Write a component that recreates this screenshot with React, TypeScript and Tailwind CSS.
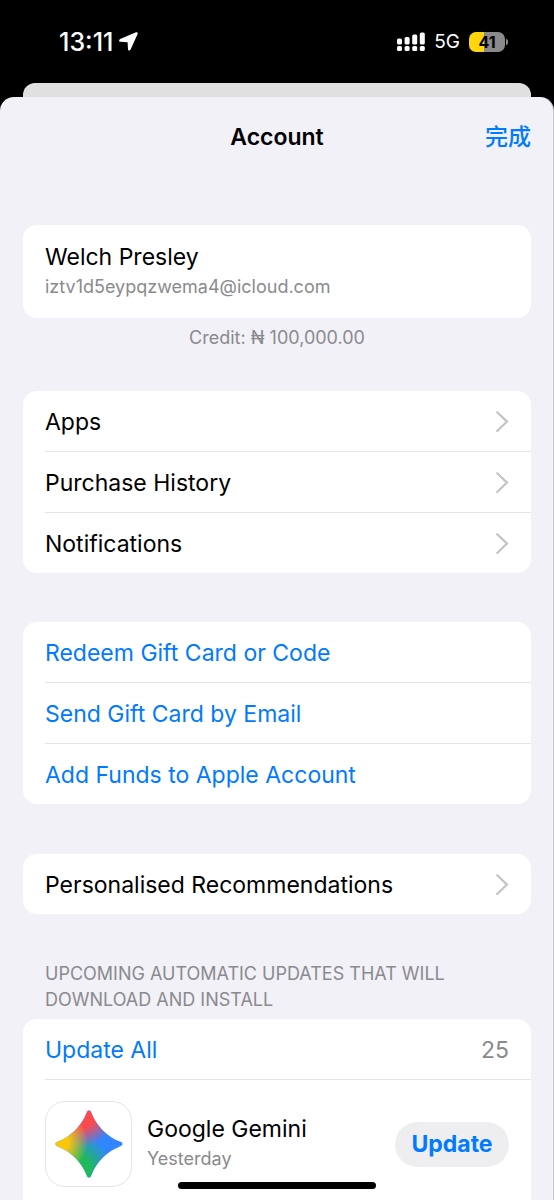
import React from 'react';

type Row = {
  label: string;
  href: string;
};

const accountRows: Row[] = [
  { label: 'Apps', href: '#apps' },
  { label: 'Purchase History', href: '#history' },
  { label: 'Notifications', href: '#notifications' },
];

const giftRows: string[] = [
  'Redeem Gift Card or Code',
  'Send Gift Card by Email',
  'Add Funds to Apple Account',
];

const Chevron: React.FC = () => (
  <svg className="h-[22px] w-[13px]" viewBox="0 0 13 22" fill="none" aria-hidden="true">
    <path d="M1.2 1.2 11 10.6 1.2 20" stroke="#c4c4c7" strokeWidth="2.2" strokeLinecap="round" />
  </svg>
);

const Signal: React.FC = () => (
  <svg className="h-5 w-7" viewBox="0 0 28 20" fill="#fff" aria-hidden="true">
    <rect x="0" y="6.5" width="5" height="6" rx="1.6" />
    <rect x="7.6" y="5" width="5" height="7.5" rx="1.6" />
    <rect x="15.2" y="2.6" width="5" height="9.9" rx="1.6" />
    <rect x="22.8" y="0.4" width="5" height="12.1" rx="1.6" />
    <rect x="0" y="14" width="5" height="5" rx="1.6" />
    <rect x="7.6" y="14" width="5" height="5" rx="1.6" />
    <rect x="15.2" y="14" width="5" height="5" rx="1.6" />
    <rect x="22.8" y="14" width="5" height="5" rx="1.6" />
  </svg>
);

const StatusBar: React.FC = () => (
  <div className="flex h-[83px] items-center justify-between pr-[46px] pl-[59px] text-white">
    <div className="flex items-center gap-[6px]">
      <time className="text-[25px] leading-7 font-medium">13:11</time>
      <svg className="h-[19px] w-[19px]" viewBox="0 0 19 19" fill="#fff" aria-hidden="true">
        <path d="M17 .3 1.200 7C-.4 7.700-.2 9.700 1.500 9.800L8.600 10.300 9 17.200c.1 1.700 1.900 1.900 2.600.4L18.600 1.900C19 .8 18.100-.1 17 .3Z" />
      </svg>
    </div>
    <div className="flex items-center">
      <Signal />
      <span className="ml-[9px] text-[19px] leading-7">5G</span>
      <div className="ml-[9px] flex h-5 w-9 items-center justify-center rounded-[7px] bg-linear-to-r from-[#ffd60a] from-42% to-[#8a8a8a] to-42% text-[16px] leading-5 font-bold text-black">
        41
      </div>
      <div className="ml-px h-[6px] w-[2px] rounded-r-full bg-[#8a8a8a]" />
    </div>
  </div>
);

const GeminiIcon: React.FC = () => (
  <svg className="h-[68px] w-[68px]" viewBox="0 0 68 68" role="img" aria-label="Google Gemini">
    <defs>
      <clipPath id="spark">
        <path d="M34 .5C35.1 .5 35.8 1.2 36.200 2.500C41.300 16 52 26.700 65.500 31.800C66.800 32.200 67.500 32.900 67.500 34S66.800 35.800 65.500 36.200C52 41.300 41.300 52 36.200 65.500C35.800 66.800 35.100 67.500 34 67.500S32.200 66.800 31.800 65.500C26.700 52 16 41.300 2.500 36.200C1.200 35.800 .5 35.100 .5 34S1.200 32.200 2.500 31.800C16 26.700 26.700 16 31.800 2.500C32.200 1.200 32.900 .5 34 .5Z" />
      </clipPath>
      <radialGradient id="red" gradientUnits="userSpaceOnUse" cx="26" cy="2" r="35">
        <stop offset="0.45" stopColor="#fb4a4f" />
        <stop offset="1" stopColor="#fb4a4f" stopOpacity="0" />
      </radialGradient>
      <radialGradient id="yellow" gradientUnits="userSpaceOnUse" cx="0" cy="32" r="33">
        <stop offset="0.4" stopColor="#fcc60c" />
        <stop offset="1" stopColor="#fcc60c" stopOpacity="0" />
      </radialGradient>
      <radialGradient id="green" gradientUnits="userSpaceOnUse" cx="20" cy="60" r="37">
        <stop offset="0.4" stopColor="#1fb85c" />
        <stop offset="1" stopColor="#1fb85c" stopOpacity="0" />
      </radialGradient>
    </defs>
    <g clipPath="url(#spark)">
      <rect width="68" height="68" fill="#3186ff" />
      <rect width="68" height="68" fill="url(#green)" />
      <rect width="68" height="68" fill="url(#red)" />
      <rect width="68" height="68" fill="url(#yellow)" />
    </g>
  </svg>
);

const LinkRow: React.FC<Row> = ({ label, href }) => (
  <li className="group pl-[22px]">
    <a
      href={href}
      className="flex h-[61px] items-center justify-between border-b border-[#e4e4e6] pt-px pr-[22px] group-last:h-[60px] group-last:border-b-0"
    >
      {label}
      <Chevron />
    </a>
  </li>
);

const App: React.FC = () => {
  return (
    <div className="flex min-h-screen flex-col bg-black font-[Inter,'Noto_Sans_CJK_SC',sans-serif] text-[23px] leading-7 text-black">
      <StatusBar />

      {/* edge of the page behind the sheet */}
      <div className="mx-[23px] h-[14px] rounded-t-[12px] bg-[#e0e0e0]" />

      <main className="flex flex-1 flex-col rounded-t-[14px] border-r border-[#c8c8cc] bg-[#f2f1f7] pr-[22px] pl-[23px]">
        <header className="grid h-20 grid-cols-[1fr_auto_1fr] items-center">
          <h1 className="col-start-2 font-semibold">Account</h1>
          <button type="button" className="justify-self-end font-medium text-[#007aff]">
            完成
          </button>
        </header>

        <section className="mt-12 h-[93px] rounded-[14px] bg-white px-[22px] pt-[18px]">
          <h2>Welch Presley</h2>
          <p className="mt-1 text-[18px] leading-6 text-[#8a8a8e]">iztv1d5eypqzwema4@icloud.com</p>
        </section>
        <p className="mt-2 text-center text-[18px] leading-6 text-[#8a8a8e]">Credit: ₦ 100,000.00</p>

        <ul className="mt-[41px] rounded-[14px] bg-white">
          {accountRows.map((row) => (
            <LinkRow key={row.label} {...row} />
          ))}
        </ul>

        <ul className="mt-[49px] rounded-[14px] bg-white text-[#007aff]">
          {giftRows.map((label) => (
            <li key={label} className="group pl-[22px]">
              <button
                type="button"
                className="flex h-[61px] w-full items-center border-b border-[#e4e4e6] pt-[2px] group-last:h-[60px] group-last:border-b-0"
              >
                {label}
              </button>
            </li>
          ))}
        </ul>

        <ul className="mt-[50px] rounded-[14px] bg-white">
          <LinkRow label="Personalised Recommendations" href="#recommendations" />
        </ul>

        <h2 className="mt-[47px] mb-[6px] px-[22px] text-[18px] leading-[26px] text-[#8a8a8e] uppercase">
          Upcoming automatic updates that will download and install
        </h2>
        <section className="flex-1 rounded-t-[14px] bg-white pl-[22px]">
          <div className="flex h-[61px] items-center justify-between border-b border-[#e4e4e6] pt-[2px] pr-[22px]">
            <button type="button" className="text-[#007aff]">Update All</button>
            <span className="text-[#8a8a8e]">25</span>
          </div>
          <div className="flex items-center pt-[21px] pr-[22px]">
            <div className="flex h-[86px] w-[87px] items-center justify-center rounded-[20px] border border-[#e4e4e6]">
              <GeminiIcon />
            </div>
            <div className="ml-[15px] flex-1 pb-[2px]">
              <h3>Google Gemini</h3>
              <p className="mt-1 text-[18px] leading-6 text-[#8a8a8e]">Yesterday</p>
            </div>
            <button
              type="button"
              className="h-[45px] w-[114px] rounded-full bg-[#eeeef0] font-bold text-[#007aff]"
            >
              Update
            </button>
          </div>
        </section>
      </main>

      {/* home indicator */}
      <div className="fixed bottom-[11px] left-1/2 h-[7px] w-[198px] -translate-x-1/2 rounded-full bg-black" />
    </div>
  );
};

export default App;
